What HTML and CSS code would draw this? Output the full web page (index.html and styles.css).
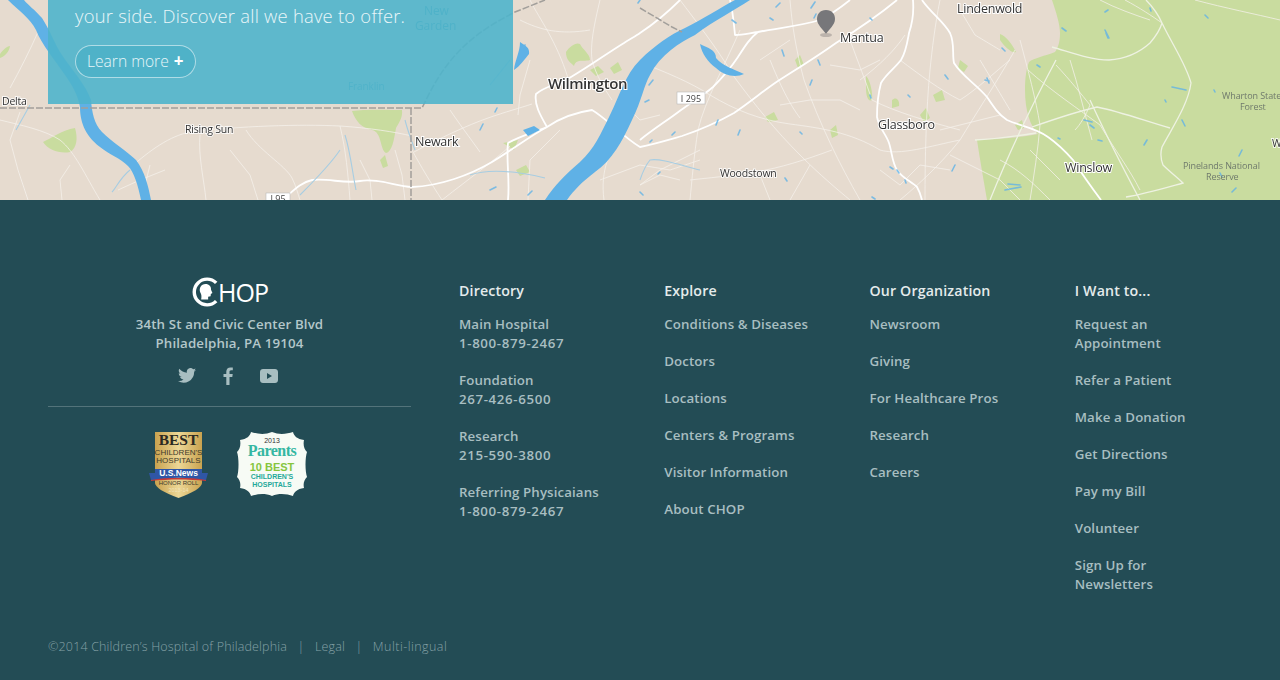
FILE: index.html
```html
<!DOCTYPE html>
<html lang="en">
<head>
<meta charset="utf-8">
<title>Children's Hospital of Philadelphia</title>
<link rel="stylesheet" href="styles.css">
</head>
<body>
<section class="map">
  <svg class="map-art" width="1280" height="200" viewBox="0 0 1280 200">
    <rect class="land" width="1280" height="200"/>
    <path class="green" d="M1052 0C1056 12 1060 24 1060 33 1060 42 1058 48 1055 52 1045 56 1034 58 1029 62 1025 72 1024 90 1026 105 1028 118 1032 128 1038 134 1020 138 995 139 977 140 980 160 984 182 987 200H1280V0Z"/>
    <path class="green" d="M352 111C365 109 390 110 402 110 403 118 398 124 396 128 394 140 392 152 386 153 380 150 382 132 372 130 362 128 356 122 352 111Z"/>
    <path class="green" d="M43 142C52 138 62 130 75 128 78 138 77 148 70 152 60 154 48 150 43 142Z"/>
    <path class="green" d="M380 160L385 155 388 166 383 168ZM0 54C3 50 7 46 10 46 9 52 5 56 0 58ZM566 52C570 46 576 42 580 44 583 50 590 54 590 60 584 62 576 58 574 66 570 62 566 60 566 52ZM590 70L598 66 604 72 596 76ZM610 68L618 62 622 70 614 74ZM516 170L526 165 530 172 520 176ZM503 143L518 140 514 150ZM866 76C870 80 873 92 872 100 868 102 866 96 866 88ZM892 100C896 96 900 100 899 106L892 108ZM1000 40C1004 46 1012 54 1016 52 1012 44 1006 36 1000 34ZM960 60L968 66 964 72 958 68ZM933 95L942 90 945 100 936 102ZM920 115L926 108 930 118 924 122ZM830 130L836 125 838 135 832 138ZM795 60L800 55 804 65 798 68ZM765 117L774 112 778 120 768 122ZM1015 125L1022 120 1024 128 1018 130Z"/>
    <g class="thin">
      <path d="M0 120C20 125 45 130 60 140 75 152 85 175 100 200M130 168C150 150 170 136 190 132 240 126 300 124 340 126 370 128 395 132 412 136M200 135C198 155 204 180 206 200M246 130C258 150 285 165 292 178 296 186 298 194 300 200M10 88C20 70 30 50 38 32M340 126C346 150 348 175 350 200M412 150C420 165 432 185 442 200M414 152C440 138 468 125 488 118 505 112 520 108 532 104M480 152C470 138 458 122 450 110M20 112L10 140 18 170 28 200M70 165L60 180 62 200M150 165L145 185 150 200M165 170L140 180 118 190M230 150L250 175 258 200M395 150L402 175 405 200M360 160L370 180 372 200"/>
      <path d="M530 0C540 20 556 40 568 78M600 0C594 25 590 45 592 60 596 75 604 88 612 100M510 146C495 160 470 178 442 200M622 132C610 150 600 170 604 200M520 20C540 30 560 35 590 30M530 60L520 95 518 115M600 180L640 165 670 170 700 160M560 130L530 160 528 200M640 185L660 175 680 180M620 100L640 120 660 115"/>
      <path d="M640 62C665 72 690 82 710 95 735 110 760 120 790 124 820 128 850 132 880 150 900 156 930 146 960 140M680 0C695 20 715 45 735 78 755 105 775 130 800 155 820 175 838 190 850 200M740 30C725 65 705 100 698 130 694 155 692 180 690 200M790 0C792 25 796 50 804 80 820 125 840 165 860 200M850 40C858 62 866 82 872 100 895 112 930 122 960 130M832 150C805 160 780 168 755 172 730 176 708 178 690 180M900 60C920 75 940 90 960 100 976 90 995 72 1010 60M940 0C935 25 932 50 930 70 926 110 925 160 925 200M1015 50C995 85 975 115 960 140 940 165 918 185 900 200M770 60C780 85 790 105 800 118M860 80C880 65 895 50 905 35M700 150L660 170 640 185M760 175L770 200M810 165L790 200M980 60L1010 110M1000 115L940 130M860 110L840 100 810 100 780 105M830 65L860 70 880 60M760 60L790 40M950 155L1000 180 1020 200M960 10L975 35 1000 50M880 170L900 185 920 165 950 170"/>
      <path d="M1020 40C1028 70 1036 100 1040 125 1038 150 1034 175 1030 200M1028 70C1050 90 1080 110 1100 125 1115 150 1130 170 1140 190M1056 65C1070 80 1082 95 1090 105 1086 115 1080 125 1075 130M1125 0C1140 8 1152 16 1162 23M1100 0C1115 8 1135 15 1150 20M1195 0C1225 8 1255 14 1280 20M1060 180L1030 150M1070 60C1078 85 1085 115 1092 140M1000 160C1020 170 1035 185 1050 200"/>
    </g>
    <g class="road">
      <path d="M286 197C294 190 302 182 312 180 328 178 345 184 360 181 378 178 395 186 412 187 440 186 470 175 492 162 512 150 530 136 547 127 560 118 578 112 592 110 606 118 622 136 640 147 655 144 668 140 682 136 700 130 718 122 734 113 750 102 762 92 775 83 795 70 815 58 836 43 860 28 880 14 897 0"/>
      <path d="M547 127C540 115 534 104 536 94 545 86 560 84 571 77 590 66 606 54 624 43 630 39 636 36 640 33 655 23 668 12 680 0"/>
      <path d="M508 200C510 180 506 160 508 143 520 136 535 132 547 127"/>
      <path d="M640 140C652 130 668 120 681 110 692 102 704 95 713 87 724 76 732 66 738 57 745 46 750 38 758 32 778 28 800 26 820 20 828 16 840 8 850 0M730 0C733 12 734 25 735 35 743 35 750 33 758 32"/>
      <path d="M922 0C930 12 944 22 950 33 955 44 952 54 954 63 962 76 976 84 987 97 993 106 998 114 1007 120 1020 126 1036 128 1048 137 1058 144 1066 152 1073 160 1082 174 1092 188 1101 200"/>
      <path d="M913 0C914 12 912 24 909 33 907 44 906 52 901 60 895 68 886 74 881 83 878 94 877 106 877 117 879 128 886 134 889 143 892 152 892 162 897 170 902 178 912 182 917 187 920 192 921 196 922 200"/>
    </g>
    <g class="road-mid">
      <path d="M1052 47C1070 52 1090 60 1109 60 1125 59 1140 52 1150 43 1156 36 1160 30 1162 23 1158 14 1152 6 1146 0M1162 23C1172 44 1186 64 1191 83 1188 105 1172 128 1162 147 1160 154 1161 160 1163 165 1170 172 1178 178 1183 183 1165 188 1145 194 1126 197M1032 127C1052 120 1075 112 1097 107 1122 112 1148 122 1170 128M990 200C1006 160 1032 105 1056 60M1090 100C1106 135 1124 170 1140 200M975 140C996 139 1016 136 1036 133"/>
    </g>
    <path class="water" d="M545 200C555 185 565 175 580 162 595 148 600 135 610 115 620 95 625 75 640 60 655 45 670 35 685 28 705 18 720 8 735 0H750C735 10 715 20 695 35 680 42 660 55 650 75 644 85 642 100 632 120 622 142 612 160 595 172 582 182 574 190 567 200Z"/>
    <path class="water" d="M8 0C20 12 30 18 36 30 42 45 55 60 65 75 72 85 78 95 80 107 80 120 84 135 100 147 110 155 120 158 128 166 134 172 138 185 141 200H151C148 185 145 172 136 160 128 152 112 142 102 132 94 124 92 112 91 100 86 85 72 70 62 55 55 45 50 30 42 18 35 10 28 5 24 0Z"/>
    <path class="water" d="M700 44C708 48 716 50 716 58 722 66 736 70 744 74 736 78 724 76 716 68 708 62 702 54 700 44ZM520 42C526 46 530 48 529 54 524 60 520 66 514 70 515 60 520 52 520 42ZM523 130L534 126 540 130 528 136Z"/>
    <path class="specks" d="M640 0l-2 3M815 2l-4 6M780 3l-4 4M732 20l4 3M782 50l2 6M770 18l3 2M816 14l-2 4M812 80l-2 5M818 60l2 5M653 80l-4 5M649 100l-4 2M675 132l-3 3M740 130l-2 5M718 120l-2 5M870 95l1 3M908 95l2 2M945 75l3 4M987 78l2 5M1002 48l3 3M1037 65l3 2M1062 28l4 3M1105 12l3-2M1105 30l4 8M1108 38l-2-5M1172 87l14 3M1182 120l3 6M1205 15l3 3M1150 8l1 3M1084 120l8 2M1090 125l4 3M1098 140l4 1M1147 140l-3 5M1005 190l16-3M1008 184l12 1M1242 150l-3 6M1220 173l2 4M1236 188l-4 4M985 80l4 1M1058 138l2 1M872 197l3 2M890 167l3 2M897 170l2 3M955 165l-3 6M905 180l1 3M800 132l2 2M785 178l2 3M650 142l2-2M870 18l2 2M1214 90l1 2M1165 100l1 2M660 172l-2 2M480 130l3-6M525 45l-3 4M495 112l2-4M490 190l6-3M528 195l4-4M640 192l3 3"/>
    <path class="water-thin" d="M300 195C315 180 330 165 340 150M405 120C408 132 412 142 415 150M700 170C680 165 660 158 650 160 645 166 642 174 640 180M470 175C490 168 520 172 545 178M345 135C350 150 352 170 356 190M130 170C120 178 116 188 112 192M16 130L30 105M490 85L510 60"/>
    <g class="border">
      <path d="M0 108H422L426 100C450 50 480 30 515 12L545 0"/>
      <path d="M411 108V200"/>
      <path d="M640 8L672 27 682 32"/>
    </g>
    <g class="pin">
      <path d="M826 10C832 10 835 14 835 19 835 25 829 29 826 34 823 29 817 25 817 19 817 14 820 10 826 10Z"/>
      <ellipse cx="826" cy="35" rx="6" ry="2"/>
    </g>
    <g class="labels">
      <text class="lb" x="2" y="105">Delta</text>
      <text class="lb" x="185" y="133">Rising Sun</text>
      <text class="lb big" x="415" y="146">Newark</text>
      <text class="lb xl" x="548" y="89">Wilmington</text>
      <text class="lb big" x="840" y="42">Mantua</text>
      <text class="lb big" x="957" y="13">Lindenwold</text>
      <text class="lb big" x="878" y="129">Glassboro</text>
      <text class="lb" x="720" y="177">Woodstown</text>
      <text class="lb big" x="1065" y="172">Winslow</text>
      <text class="park" x="1222" y="99">Wharton State</text>
      <text class="park" x="1240" y="110">Forest</text>
      <text class="park" x="1183" y="169">Pinelands National</text>
      <text class="park" x="1206" y="180">Reserve</text>
      <text class="lb" x="1272" y="147">W</text>
      <text class="ghost" x="424" y="15">New</text>
      <text class="ghost" x="415" y="30">Garden</text>
      <text class="ghost small" x="348" y="90">Franklin</text>
      <rect class="shield" x="677" y="92" width="28" height="12"/>
      <text class="shield-text" x="691" y="102">I 295</text>
      <rect class="shield" x="266" y="193" width="24" height="12"/>
      <text class="shield-text" x="278" y="202">I 95</text>
    </g>
  </svg>
  <div class="promo">
    <p class="promo-text">your side. Discover all we have to offer.</p>
    <a class="promo-btn" href="#">Learn more <span class="plus">+</span></a>
  </div>
</section>

<footer class="footer">
  <div class="columns">
    <div class="about">
      <div class="logo">
        <svg class="logo-mark" width="30" height="30" viewBox="0 0 28 28">
          <path class="logo-ring" d="M23.500 5.500A12 12 0 1 0 23.500 22.500"/>
          <path class="logo-head" d="M13.500 6.500C17 6.500 19 9 18.700 12L20 15 18.500 15.800 18.300 18 16 18.500V21H9.500C10 18 9.800 16.500 8.700 14.500 7 10.500 9.500 6.500 13.500 6.500Z"/>
        </svg>
        <span class="logo-word">HOP</span>
      </div>
      <p class="address">34th St and Civic Center Blvd<br>Philadelphia, PA 19104</p>
      <div class="social">
        <svg width="18" height="15" viewBox="0 0 24 20"><path class="icon" d="M24 2.400c-.9.400-1.800.7-2.800.8 1-.6 1.800-1.600 2.200-2.700-1 .6-2 1-3.100 1.200A4.900 4.900 0 0 0 11.900 6.200C7.800 6 4.200 4 1.700.9c-1.300 2.200-.7 5.100 1.500 6.600-.8 0-1.600-.2-2.200-.6 0 2.400 1.700 4.500 4 5-.7.200-1.500.2-2.200.1.600 2 2.500 3.400 4.600 3.400A9.900 9.900 0 0 1 0 17.400 14 14 0 0 0 21.500 5c1-.7 1.900-1.600 2.500-2.600z"/></svg>
        <svg width="10" height="18" viewBox="0 0 10 18"><path class="icon" d="M6.500 18V10H9.300L9.700 7H6.500V5C6.500 4 6.800 3.300 8.200 3.300H9.800V.5C9.500.5 8.500.4 7.400.4 5 .4 3.300 1.900 3.300 4.600V7H.5V10H3.300V18Z"/></svg>
        <svg width="18" height="14" viewBox="0 0 18 14"><path class="icon" d="M3 0H15C16.700 0 18 1.300 18 3V11C18 12.700 16.700 14 15 14H3C1.300 14 0 12.700 0 11V3C0 1.300 1.300 0 3 0ZM7 4V10L12 7Z" fill-rule="evenodd"/></svg>
      </div>
      <div class="badges">
        <svg width="60" height="68" viewBox="0 0 60 68">
          <defs>
            <linearGradient id="goldFill" x1="0" y1="0" x2="1" y2="0">
              <stop offset="0" stop-color="#c9a24f"/>
              <stop offset=".5" stop-color="#ecd796"/>
              <stop offset="1" stop-color="#c9a24f"/>
            </linearGradient>
          </defs>
          <path class="gold" d="M6 1H53V52C53 56 44 62 29.500 67 15 62 6 56 6 52Z"/>
          <text class="b-best" x="29.500" y="14">BEST</text>
          <text class="b-small" x="29.500" y="24">CHILDREN'S</text>
          <text class="b-small" x="29.500" y="32">HOSPITALS</text>
          <path class="ribbon-red" d="M2 47H57V50C40 48 20 48 2 50Z"/>
          <path class="ribbon" d="M0 42H6V38H53V42H59L57 49C40 46 20 46 2 49Z"/>
          <text class="b-news" x="29.500" y="45">U.S.News</text>
          <text class="b-honor" x="29.500" y="54">HONOR ROLL</text>
          <text class="b-year" x="29.500" y="61">2013-14</text>
        </svg>
        <svg width="70" height="66" viewBox="0 0 70 66">
          <path class="scallop" d="M35 1C42 4 50 3 56 1 57 5 60 8 67 9 66 14 67 18 70 21 68 27 68 40 70 46 67 49 66 53 67 57 60 58 57 61 56 65 50 63 42 62 35 65 28 62 20 63 14 65 13 61 10 58 3 57 4 53 3 49 0 46 2 40 2 27 0 21 3 18 4 14 3 9 10 8 13 5 14 1 20 3 28 4 35 1Z"/>
          <text class="p-year" x="35" y="12">2013</text>
          <text class="p-name" x="35" y="25">Parents</text>
          <text class="p-ten" x="35" y="40">10 BEST</text>
          <text class="p-sub" x="35" y="48">CHILDREN'S</text>
          <text class="p-sub" x="35" y="56">HOSPITALS</text>
        </svg>
      </div>
    </div>

    <nav class="col">
      <h3 class="col-title">Directory</h3>
      <a class="col-item" href="#">Main Hospital<br><span class="phone">1-800-879-2467</span></a>
      <a class="col-item" href="#">Foundation<br><span class="phone">267-426-6500</span></a>
      <a class="col-item" href="#">Research<br><span class="phone">215-590-3800</span></a>
      <a class="col-item" href="#">Referring Physicaians<br><span class="phone">1-800-879-2467</span></a>
    </nav>
    <nav class="col">
      <h3 class="col-title">Explore</h3>
      <a class="col-item" href="#">Conditions &amp; Diseases</a>
      <a class="col-item" href="#">Doctors</a>
      <a class="col-item" href="#">Locations</a>
      <a class="col-item" href="#">Centers &amp; Programs</a>
      <a class="col-item" href="#">Visitor Information</a>
      <a class="col-item" href="#">About CHOP</a>
    </nav>
    <nav class="col">
      <h3 class="col-title">Our Organization</h3>
      <a class="col-item" href="#">Newsroom</a>
      <a class="col-item" href="#">Giving</a>
      <a class="col-item" href="#">For Healthcare Pros</a>
      <a class="col-item" href="#">Research</a>
      <a class="col-item" href="#">Careers</a>
    </nav>
    <nav class="col">
      <h3 class="col-title">I Want to...</h3>
      <a class="col-item" href="#">Request an<br>Appointment</a>
      <a class="col-item" href="#">Refer a Patient</a>
      <a class="col-item" href="#">Make a Donation</a>
      <a class="col-item" href="#">Get Directions</a>
      <a class="col-item" href="#">Pay my Bill</a>
      <a class="col-item" href="#">Volunteer</a>
      <a class="col-item" href="#">Sign Up for<br>Newsletters</a>
    </nav>
  </div>
  <div class="legal">
    <span>©2014 Children’s Hospital of Philadelphia</span>
    <span class="sep">|</span>
    <a href="#">Legal</a>
    <span class="sep">|</span>
    <a class="legal-wide" href="#">Multi-lingual</a>
  </div>
</footer>
</body>
</html>
```

FILE: styles.css
```css
* { box-sizing: border-box; }
html, body { margin: 0; padding: 0; }
body {
  width: 1280px;
  height: 680px;
  overflow: hidden;
  font-family: "Open Sans", "Noto Sans", sans-serif;
  background: #234c55;
}
a { color: inherit; text-decoration: none; }

/* map */
.map { position: relative; height: 200px; overflow: hidden; background: #e6dbcf; }
.map-art { display: block; filter: blur(0.6px); }
.land { fill: #e6dbcf; }
.green { fill: #c9dc9f; }
.thin path { fill: none; stroke: #f6f2ec; stroke-width: 1; opacity: .75; }
.road path { fill: none; stroke: #fff; stroke-width: 1.8; stroke-linejoin: round; }
.road-mid path { fill: none; stroke: #eef2e2; stroke-width: 1.3; }
.water { fill: #5fb1e6; }
.specks { fill: none; stroke: #62b3e6; stroke-width: 1.6; stroke-linecap: round; opacity: .8; }
.water-thin { fill: none; stroke: #a7cde2; stroke-width: 1.1; }
.border path { fill: none; stroke: #a29f9b; stroke-width: 1.5; stroke-dasharray: 7 2; }
.pin path { fill: #77777a; }
.pin ellipse { fill: #a9a39d; opacity: .7; }
.labels text { font-family: "Open Sans", "Noto Sans", sans-serif; }
.lb {
  font-size: 10.5px;
  fill: #333;
  stroke: #fff;
  stroke-width: 2px;
  stroke-opacity: .8;
  paint-order: stroke;
  letter-spacing: -.2px;
}
.big { font-size: 12.5px; letter-spacing: -.25px; stroke-opacity: 1; font-weight: 500; }
.xl { font-size: 15px; font-weight: 600; letter-spacing: -.45px; stroke-opacity: 1; }
.park { font-size: 9px; fill: #6f7a6c; letter-spacing: -.1px; }
.ghost { font-size: 12px; fill: #4da0b5; letter-spacing: -.1px; }
.ghost.small { font-size: 10px; fill: #58a9bd; }
.shield { fill: #fff; stroke: #bbb; stroke-width: .6px; }
.shield-text { font-size: 9px; fill: #444; text-anchor: middle; }

.promo {
  position: absolute;
  left: 48px;
  top: 0;
  width: 465px;
  height: 104px;
  padding-left: 27px;
  background: rgba(79, 180, 203, .9);
  color: #e9f6f9;
  font-weight: 300;
}
.promo-text {
  margin: 0;
  padding-top: 3px;
  font-size: 18.400px;
  line-height: 25px;
  letter-spacing: .23px;
}
.promo-btn {
  display: inline-flex;
  align-items: center;
  gap: 5px;
  height: 33px;
  width: 121px;
  margin-top: 17px;
  padding: 0 0 2px 11px;
  border: 1px solid rgba(255, 255, 255, .55);
  border-radius: 17px;
  background: #4fb2c8;
  font-size: 15.600px;
}
.plus { font-weight: 700; color: #fff; font-size: 17px; line-height: 1; }

/* footer */
.footer { height: 480px; background: #234c55; color: #a8bec1; }
.columns {
  display: grid;
  grid-template-columns: 459px repeat(4, 205.25px);
  padding-top: 81px;
  height: 429px;
}
.about { padding-left: 48px; display: flex; flex-direction: column; }
.about > * { width: 363px; }
.logo { display: flex; justify-content: center; align-items: center; height: 22px; color: #fff; }
.logo-mark { margin-right: -3px; }
.logo-ring { fill: none; stroke: #fff; stroke-width: 3.200; }
.logo-head { fill: #fff; }
.logo-word { font-family: "Open Sans", sans-serif; font-size: 25px; line-height: 22px; letter-spacing: -1px; font-weight: 500; }
.address {
  margin: 12px 0 0;
  font-size: 13.300px;
  line-height: 19px;
  font-weight: 600;
  letter-spacing: .13px;
  text-align: center;
  color: #b4c7ca;
}
.social {
  display: flex;
  justify-content: center;
  align-items: center;
  gap: 27px;
  height: 54px;
  padding: 0 3px 8px 0;
  border-bottom: 1px solid rgba(255, 255, 255, .22);
}
.icon { fill: #a8bec1; }
.badges {
  display: flex;
  justify-content: center;
  gap: 28px;
  align-items: flex-start;
  margin-top: 24px;
  padding-right: 3px;
}
.gold { fill: url(#goldFill); }
.b-best { font: 700 15.500px "Liberation Serif", serif; text-anchor: middle; fill: #2c2a22; }
.b-small { font: 400 8px "Liberation Sans Narrow", "Liberation Sans", sans-serif; text-anchor: middle; fill: #3d3a2c; }
.ribbon { fill: #2f56a6; }
.ribbon-red { fill: #c53a3a; }
.b-news { font: 700 8.500px "Liberation Sans", sans-serif; text-anchor: middle; fill: #fff; }
.b-honor { font: 400 6px "Liberation Sans", sans-serif; text-anchor: middle; fill: #3d3a2c; }
.b-year { font: 400 5.500px "Liberation Sans", sans-serif; text-anchor: middle; fill: #f1e3b9; }
.scallop { fill: #f7fbf5; }
.p-year { font: 400 7px "Liberation Sans", sans-serif; text-anchor: middle; fill: #333; }
.p-name { font: 700 16px "Liberation Serif", serif; text-anchor: middle; fill: #35b7a2; letter-spacing: -.5px; }
.p-ten { font: 700 11px "Liberation Sans", sans-serif; text-anchor: middle; fill: #86c53d; }
.p-sub { font: 700 7px "Liberation Sans", sans-serif; text-anchor: middle; fill: #1fa99a; }

.col { display: flex; flex-direction: column; align-items: flex-start; }
.col-title {
  margin: 0 0 15px;
  font-size: 14.200px;
  line-height: 19px;
  font-weight: 600;
  letter-spacing: .15px;
  color: #e4ebec;
}
.col-item {
  display: block;
  margin-bottom: 18px;
  font-size: 13.300px;
  line-height: 19px;
  font-weight: 600;
  letter-spacing: .1px;
  color: #a8bec1;
}
.phone { letter-spacing: .63px; }
.legal {
  display: flex;
  align-items: center;
  gap: 10.500px;
  padding: 8px 0 0 48px;
  font-size: 12.500px;
  line-height: 20px;
  font-weight: 300;
  letter-spacing: .16px;
  color: #85a1a6;
}
.legal-wide { letter-spacing: .46px; }
```
